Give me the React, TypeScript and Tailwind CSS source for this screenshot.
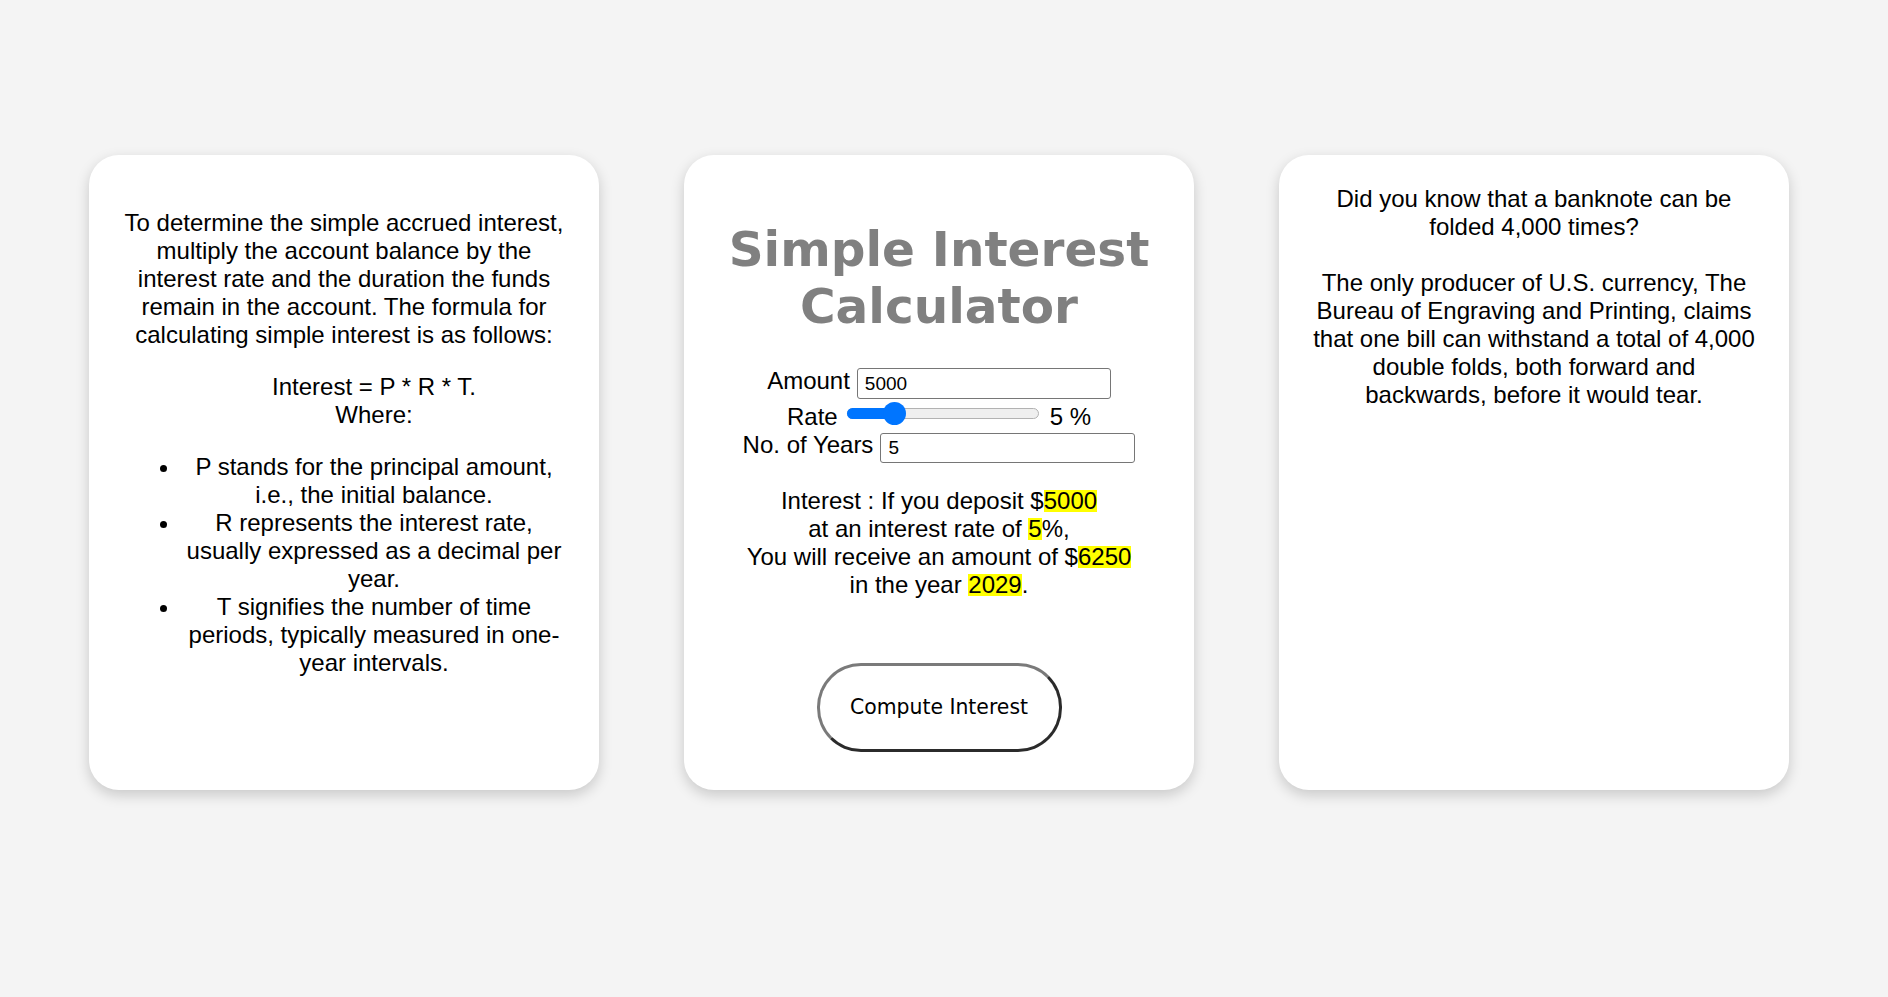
import React from "react";

const arial = "font-['Liberation_Sans',Arial,sans-serif]";

function Hl({ children }: { children: React.ReactNode }) {
  return <span className="inline-block bg-[#ffff00] leading-[22px]">{children}</span>;
}

export default function App() {
  return (
    <div className={`min-h-screen w-full bg-[#f4f4f4] ${arial} text-[24px] leading-[28px] text-black`}>
      <div className="flex gap-[85px] pl-[89px] pt-[155px]">
        {/* Left card */}
        <div className="h-[635px] w-[510px] shrink-0 rounded-[30px] bg-white px-[32px] pt-[30px] text-center shadow-[0_5px_14px_rgba(0,0,0,0.18)]">
          <p className="my-[24px]">
            To determine the simple accrued interest, multiply the account balance by the interest rate and the duration the funds remain in the account. The formula for calculating simple interest is as follows:
          </p>
          <p className="my-[24px] pl-[60px]">
            Interest = P * R * T.
            <br />
            Where:
          </p>
          <ul className="my-[24px] list-disc pl-[60px]">
            <li>P stands for the principal amount, i.e., the initial balance.</li>
            <li>R represents the interest rate, usually expressed as a decimal per year.</li>
            <li>T signifies the number of time periods, typically measured in one-year intervals.</li>
          </ul>
        </div>

        {/* Middle card */}
        <div className="flex h-[635px] w-[510px] shrink-0 flex-col items-center rounded-[30px] bg-white px-[32px] pt-[30px] text-center shadow-[0_5px_14px_rgba(0,0,0,0.18)]">
          <h1 className="mb-[32px] mt-[36px] font-['DejaVu_Sans',Verdana,sans-serif] text-[48.5px] font-bold leading-[57px] text-[#808080]">
            Simple Interest Calculator
          </h1>

          <div className="flex items-start justify-center gap-[7px]">
            <span>Amount</span>
            <input
              readOnly
              value="5000"
              className={`mt-[1px] h-[31px] w-[254px] rounded-[3px] border border-[#767676] bg-white px-[7px] ${arial} text-[19px] text-black outline-none`}
            />
          </div>

          <div className="mt-[3px] flex items-start justify-center">
            <span className="mt-[1px]">Rate</span>
            <div className="relative ml-[9px] h-[23px] w-[192px]">
              <div className="absolute left-0 right-0 top-[6px] h-[11px] rounded-full border border-[#b2b2b2] bg-[#efefef]" />
              <div className="absolute left-0 top-[6px] h-[11px] w-[56px] rounded-full bg-[#0075ff]" />
              <div className="absolute left-[36px] top-0 h-[23px] w-[23px] rounded-full bg-[#0075ff]" />
            </div>
            <span className="ml-[11px] mt-[1px]">5 %</span>
          </div>

          <div className="flex items-start justify-center gap-[7px]">
            <span>No. of Years</span>
            <input
              readOnly
              value="5"
              className={`mt-[2px] h-[30px] w-[255px] rounded-[3px] border border-[#767676] bg-white px-[7px] ${arial} text-[19px] text-black outline-none`}
            />
          </div>

          <p className="mt-[24px]">
            Interest : If you deposit $<Hl>5000</Hl>
            <br />
            at an interest rate of <Hl>5</Hl>%,
            <br />
            You will receive an amount of $<Hl>6250</Hl>
            <br />
            in the year <Hl>2029</Hl>.
          </p>

          <button className="mt-[64px] flex h-[89px] w-[245px] items-center justify-center rounded-[44px] border-[3px] border-b-[#2b2b2b] border-l-[#7a7a7a] border-r-[#2b2b2b] border-t-[#7a7a7a] bg-white font-['DejaVu_Sans',Verdana,sans-serif] text-[20.4px] leading-none text-black">
            Compute Interest
          </button>
        </div>

        {/* Right card */}
        <div className="h-[635px] w-[510px] shrink-0 rounded-[30px] bg-white px-[32px] pt-[30px] text-center shadow-[0_5px_14px_rgba(0,0,0,0.18)]">
          <p>
            Did you know that a banknote can be folded 4,000 times?
            <br />
            <br />
            The only producer of U.S. currency, The Bureau of Engraving and Printing, claims that one bill can withstand a total of 4,000 double folds, both forward and backwards, before it would tear.
          </p>
        </div>
      </div>
    </div>
  );
}
